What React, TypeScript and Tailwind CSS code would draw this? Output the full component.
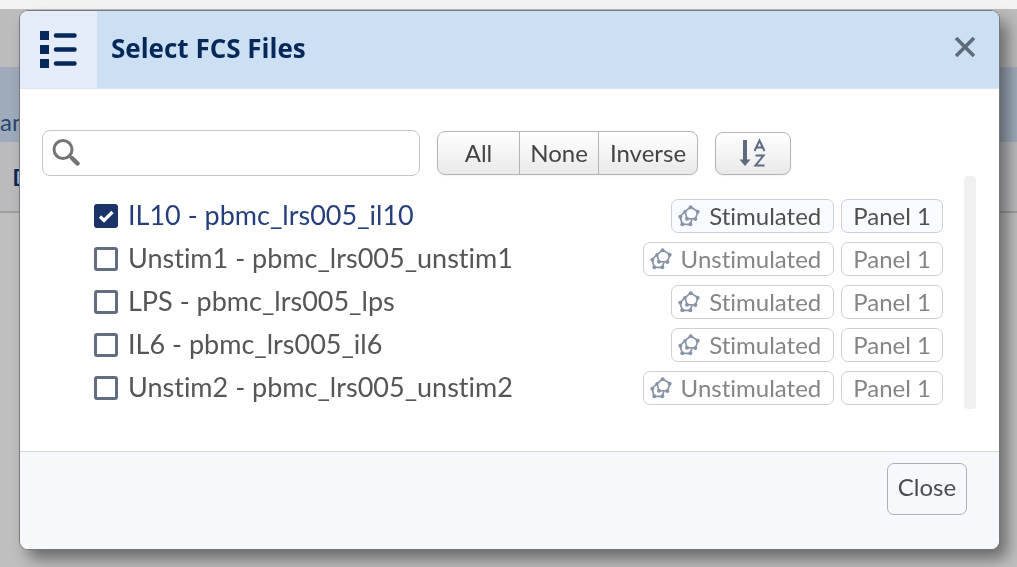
import { useState } from 'react'

interface FcsFile {
  id: string
  name: string
  condition: string
  panel: string
}

const files: FcsFile[] = [
  { id: 'il10', name: 'IL10 - pbmc_lrs005_il10', condition: 'Stimulated', panel: 'Panel 1' },
  { id: 'unstim1', name: 'Unstim1 - pbmc_lrs005_unstim1', condition: 'Unstimulated', panel: 'Panel 1' },
  { id: 'lps', name: 'LPS - pbmc_lrs005_lps', condition: 'Stimulated', panel: 'Panel 1' },
  { id: 'il6', name: 'IL6 - pbmc_lrs005_il6', condition: 'Stimulated', panel: 'Panel 1' },
  { id: 'unstim2', name: 'Unstim2 - pbmc_lrs005_unstim2', condition: 'Unstimulated', panel: 'Panel 1' },
]

function ListIcon() {
  return (
    <svg width="38" height="38" viewBox="0 0 38 38" fill="#05285a" aria-hidden="true">
      <path d="M0 0h9v9H0zM0 14h9v9H0zM0 28h9v9H0z" />
      <path
        d="M16 4.500h18.500M16 18.500h18.500M16 32.500h18.500"
        stroke="#05285a"
        strokeWidth="4.500"
        strokeLinecap="round"
      />
    </svg>
  )
}

function SearchIcon() {
  return (
    <svg width="28" height="28" viewBox="0 0 28 28" fill="none" stroke="#737373" aria-hidden="true">
      <circle cx="11" cy="10.500" r="9" strokeWidth="3" />
      <path d="M17.500 17l3 3" strokeWidth="3" />
      <path d="M20.500 19.500l5 5" strokeWidth="4.500" strokeLinecap="round" />
    </svg>
  )
}

function CloseIcon() {
  return (
    <svg width="20" height="20" viewBox="0 0 20 20" stroke="#5f6b7a" strokeWidth="3.600" aria-hidden="true">
      <path d="M1 1l18 18M19 1L1 19" />
    </svg>
  )
}

function SortIcon() {
  return (
    <svg width="28" height="30" viewBox="0 0 28 30" fill="none" stroke="#5d6a80" aria-hidden="true">
      <path d="M6 2v20" strokeWidth="4" />
      <path d="M0.500 21.500h11L6 28z" fill="#5d6a80" stroke="none" />
      <path d="M15.500 13L20.500 2.500l5 10.500M17 9.500h7" strokeWidth="2" />
      <path d="M16.500 17.500h8l-8 10h9" strokeWidth="2" />
    </svg>
  )
}

function ConditionIcon() {
  return (
    <svg width="22" height="22" viewBox="0 0 66 66" stroke="#8793a6" strokeWidth="5" fill="none" aria-hidden="true">
      <path d="M38 6L60 20L52 42L27 41L21 20ZM21 20L6 35L13 58L37 58L42 42" />
      <g fill="#8793a6" stroke="none">
        <circle cx="38" cy="7" r="6" />
        <circle cx="59" cy="20" r="6" />
        <circle cx="52" cy="42" r="6" />
        <circle cx="27" cy="41" r="6" />
        <circle cx="21" cy="20" r="5" />
        <circle cx="7" cy="35" r="6" />
        <circle cx="13" cy="58" r="6" />
        <circle cx="37" cy="58" r="6" />
      </g>
    </svg>
  )
}

interface FileRowProps {
  file: FcsFile
  checked: boolean
  onToggle: () => void
}

function FileRow({ file, checked, onToggle }: FileRowProps) {
  const tag = `flex h-[34px] items-center rounded-[7px] border text-2xl ${
    checked ? 'border-[#ccd0d8] bg-[#f8fbff] text-[#505050]' : 'border-[#d2cccf] bg-white text-[#858585]'
  }`

  return (
    <li className="flex h-[43px] items-center gap-[7px]">
      <label
        className={`flex flex-1 items-center gap-[10px] text-[27px] ${checked ? 'text-[#253f7c]' : 'text-[#555]'}`}
      >
        <span className="grid shrink-0">
          <input
            type="checkbox"
            checked={checked}
            onChange={onToggle}
            className="col-start-1 row-start-1 size-6 appearance-none rounded-[3px] border-3 border-[#626e80] bg-white checked:border-[#1b3369] checked:bg-[#1b3369]"
          />
          {checked && (
            <svg viewBox="0 0 24 24" className="pointer-events-none col-start-1 row-start-1 size-6" aria-hidden="true">
              <path d="M6 12.500l4 4L18.500 8" fill="none" stroke="#fff" strokeWidth="3.200" />
            </svg>
          )}
        </span>
        {file.name}
      </label>
      <span className={`${tag} gap-[9px] pr-3 pl-[6px]`}>
        <ConditionIcon />
        {file.condition}
      </span>
      <span className={`${tag} px-[11px]`}>{file.panel}</span>
    </li>
  )
}

function PageBackground() {
  return (
    <div className="fixed inset-0 flex flex-col bg-[#bfbfbf] text-[#2a4474]" aria-hidden="true">
      <div className="h-[9px] bg-[#f3f3f3]" />
      <div className="h-[58px] bg-[#bcbcbd]" />
      <div className="flex h-[75px] items-end bg-[#9fabba] pb-1 font-[Lato,sans-serif] text-2xl">an</div>
      <div className="flex h-[71px] items-center border-b-2 border-[#9e9e9e] bg-[#bbbbbe] pl-3 text-2xl font-semibold text-[#05285a]">
        D
      </div>
    </div>
  )
}

export default function App() {
  const [query, setQuery] = useState('')
  const [selected, setSelected] = useState<string[]>(['il10'])
  const [descending, setDescending] = useState(false)

  const toggle = (id: string) =>
    setSelected((prev) => (prev.includes(id) ? prev.filter((x) => x !== id) : [...prev, id]))

  const visible = files.filter((f) => f.name.toLowerCase().includes(query.toLowerCase()))
  if (descending) visible.reverse()

  return (
    <div className="font-['Open_Sans',sans-serif] [font-variant-ligatures:none]">
      <PageBackground />
      <div className="relative flex min-h-screen flex-col pt-[11px] pr-[18px] pb-[18px] pl-5">
        <div
          role="dialog"
          aria-labelledby="dialog-title"
          className="flex flex-1 flex-col overflow-hidden rounded-lg bg-white font-[Lato,sans-serif] shadow-[0_0_0_1px_#77797e,8px_10px_16px_rgba(0,0,0,0.45)]"
        >
          <header className="flex h-[78px] items-stretch border-b border-[#dbe4ef] bg-[#cddff3]">
            <div className="flex w-[77px] items-center justify-center bg-[#e3ecf8]">
              <ListIcon />
            </div>
            <h1
              id="dialog-title"
              className="flex flex-1 items-center pb-[2px] pl-[14px] font-['Open_Sans',sans-serif] text-[26px] font-bold text-[#05285a]"
            >
              Select FCS Files
            </h1>
            <button type="button" aria-label="Close dialog" className="px-6 pb-[6px]">
              <CloseIcon />
            </button>
          </header>

          <div className="flex-1 pt-[41px] pr-[23px] pl-[22px]">
            <div className="flex items-center gap-[17px]">
              <label className="flex h-[46px] w-[378px] items-center gap-2 rounded-lg border border-[#c3c5cc] pl-[9px]">
                <SearchIcon />
                <input
                  type="text"
                  aria-label="Search files"
                  value={query}
                  onChange={(e) => setQuery(e.target.value)}
                  className="min-w-0 flex-1 text-2xl outline-none"
                />
              </label>
              <div className="flex h-11 divide-x divide-[#b4b4b4] overflow-hidden rounded-lg border border-[#b4b4b4] bg-linear-to-b from-white to-[#e9e9e9] text-2xl text-[#444] shadow-xs">
                <button type="button" className="w-[82px]" onClick={() => setSelected(files.map((f) => f.id))}>
                  All
                </button>
                <button type="button" className="w-[79px]" onClick={() => setSelected([])}>
                  None
                </button>
                <button
                  type="button"
                  className="w-[98px]"
                  onClick={() => setSelected((prev) => files.map((f) => f.id).filter((id) => !prev.includes(id)))}
                >
                  Inverse
                </button>
              </div>
              <button
                type="button"
                aria-label="Sort by name"
                onClick={() => setDescending((prev) => !prev)}
                className="flex h-[43px] w-[76px] items-center justify-center rounded-lg border border-[#b4b4b4] bg-linear-to-b from-white to-[#e9e9e9] shadow-xs"
              >
                <SortIcon />
              </button>
            </div>

            <div className="flex">
              <ul className="flex-1 pt-[18px] pr-[21px] pl-[52px]">
                {visible.map((file) => (
                  <FileRow
                    key={file.id}
                    file={file}
                    checked={selected.includes(file.id)}
                    onToggle={() => toggle(file.id)}
                  />
                ))}
              </ul>
              {/* Scroll track */}
              <div className="w-3 rounded-sm bg-[#f0f0f0]" />
            </div>
          </div>

          <footer className="flex h-[98px] items-start justify-end border-t border-[#d5d8dd] bg-[#f6f8fc] pt-[11px] pr-8">
            <button
              type="button"
              className="h-[52px] w-[80px] rounded-[7px] border border-[#aeafb5] pb-1 text-2xl text-[#494c52]"
            >
              Close
            </button>
          </footer>
        </div>
      </div>
    </div>
  )
}
